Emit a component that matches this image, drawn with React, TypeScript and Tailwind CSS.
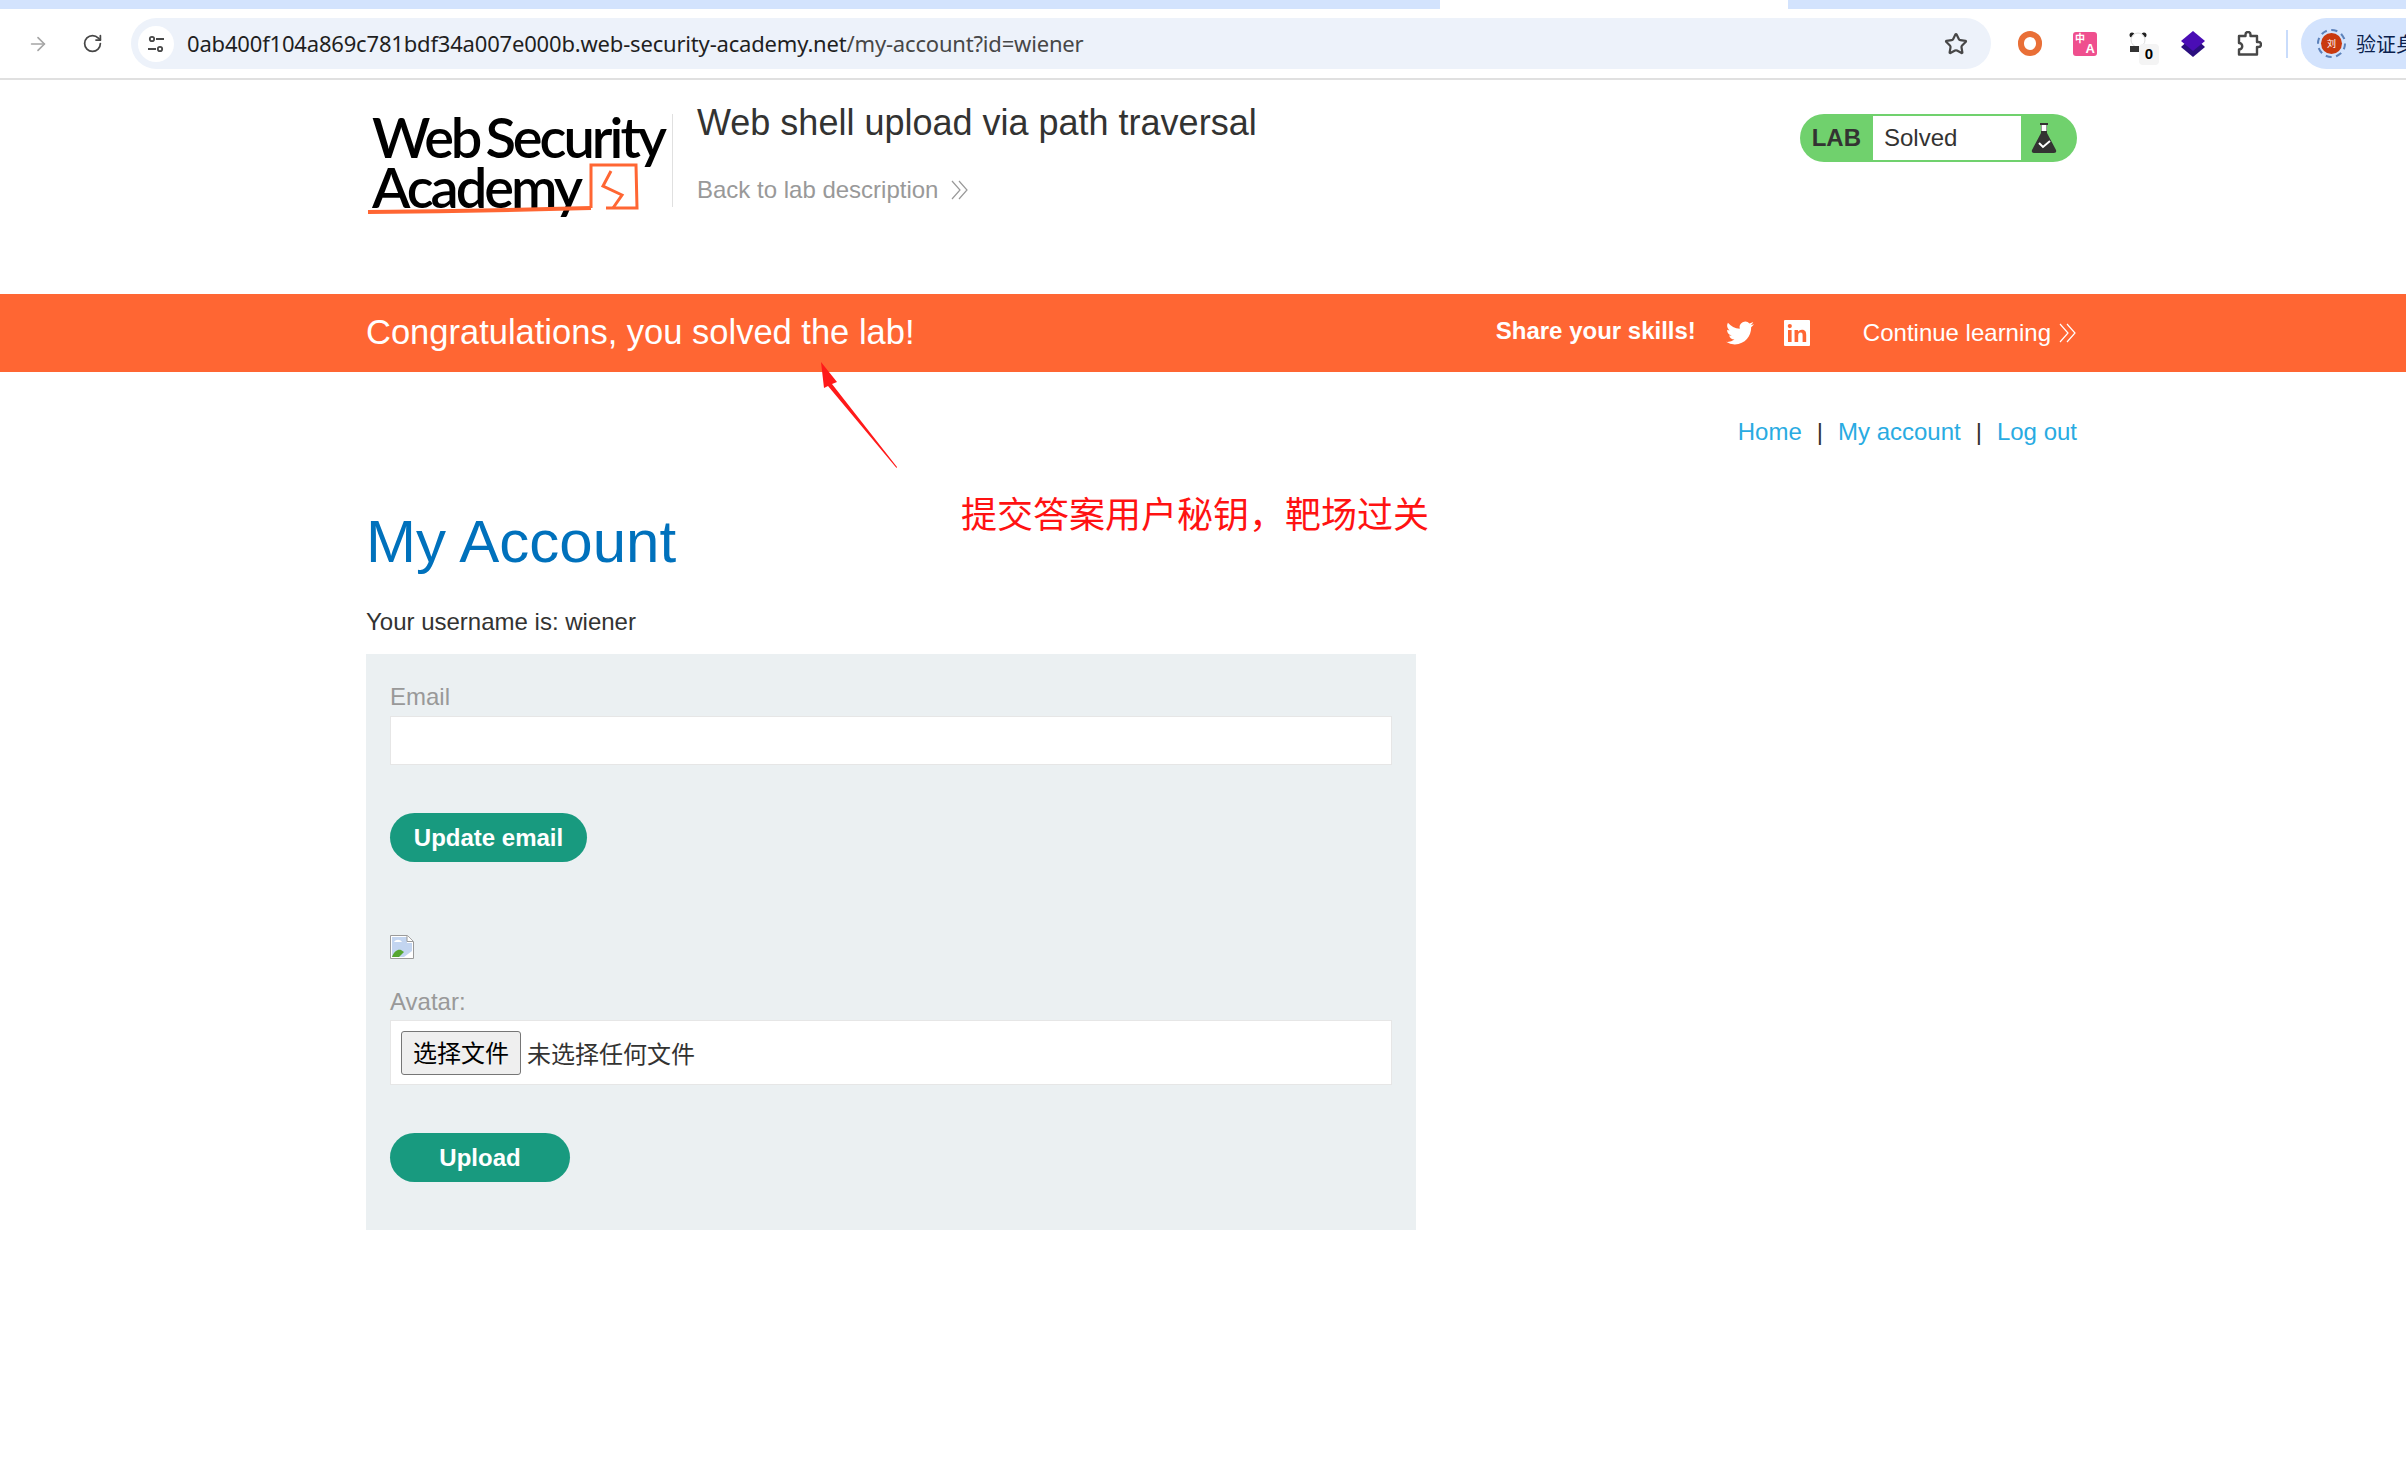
import { RotateCw, ArrowRight, Star } from 'lucide-react'

const SANS = 'font-["Liberation_Sans","Noto_Sans_CJK_SC",sans-serif]'

function Chevrons({ className }: { className?: string }) {
  return (
    <svg viewBox="0 0 18 20" className={className} fill="none" stroke="currentColor" strokeWidth="1.2">
      <path d="M1 1l8 9-8 9M8 1l8 9-8 9" />
    </svg>
  )
}

function Toolbar() {
  return (
    <div className="h-[80px] border-b-2 border-[#e0e0e0] bg-white">
      <div className="flex h-[9px] bg-[#d3e3fd]">
        <div className="ml-[1440px] w-[348px] bg-white" />
      </div>
      <div className="flex h-[69px] items-center">
        <ArrowRight className="ml-[27px] h-[22px] w-[22px] text-[#a5a5a5]" strokeWidth={1.8} />
        <RotateCw className="ml-[33px] h-[21px] w-[21px] text-[#474747]" strokeWidth={2} />
        <div className="ml-[28px] flex h-[51px] w-[1860px] items-center rounded-full bg-[#edf2fa] pl-[7px] pr-[23px]">
          <div className="flex h-[36px] w-[36px] items-center justify-center rounded-full bg-white">
            <svg viewBox="0 0 20 20" className="h-[20px] w-[20px]" fill="none" stroke="#474747" strokeWidth="1.8">
              <circle cx="6" cy="5" r="2.2" />
              <path d="M10 5h8M2 15h8" />
              <circle cx="14" cy="15" r="2.2" />
            </svg>
          </div>
          <div className='ml-[13px] font-["Noto_Sans",sans-serif] text-[22px] tracking-[-0.18px] whitespace-nowrap text-[#1f1f1f]'>
            0ab400f104a869c781bdf34a007e000b.web-security-academy.net<span className="text-[#474747]">/my-account?id=wiener</span>
          </div>
          <Star className="ml-auto h-[24px] w-[24px] text-[#474747]" strokeWidth={2.2} />
        </div>
        <div className="ml-[27px] h-[25px] w-[24px] rounded-full border-[6px] border-[#e96f37]" />
        <div className='relative ml-[31px] h-[24px] w-[24px] rounded-[3px] bg-[#ef4f8e] font-["Noto_Sans_CJK_SC",sans-serif] leading-none font-bold text-white'>
          <span className="absolute top-[1px] left-[2px] text-[10px]">中</span>
          <span className='absolute right-[2px] bottom-[1px] font-["Liberation_Sans",sans-serif] text-[13px]'>A</span>
        </div>
        <div className="relative ml-[32px] h-[24px] w-[24px]">
          <svg viewBox="0 0 18 22" className="h-[22px] w-[18px]">
            <circle cx="3" cy="3" r="2.5" fill="#222" />
            <circle cx="15" cy="3" r="2.5" fill="#222" />
            <circle cx="9" cy="8" r="7" fill="#fff" stroke="#ddd" />
            <rect x="1" y="14" width="9" height="6" fill="#333" />
          </svg>
          <div className='absolute top-[12px] left-[10px] flex h-[21px] w-[20px] items-center justify-center rounded-[4px] bg-[#f4f4f4] font-["Liberation_Sans",sans-serif] text-[15px] font-bold text-black'>
            0
          </div>
        </div>
        <svg viewBox="0 0 26 26" className="ml-[27px] h-[26px] w-[26px]">
          <path d="M13 5L25 16 13 26 1 16z" fill="#2b0f7f" />
          <path d="M13 0L25 10 13 20 1 10z" fill="#4a0db5" />
        </svg>
        <svg viewBox="0 0 26 26" className="ml-[30px] h-[26px] w-[26px]" fill="none" stroke="#474747" strokeWidth="2.4" strokeLinejoin="round">
          <path d="M3 5h6.500V3.500a2.500 2.500 0 0 1 5 0V5H21v6h1.500a2.500 2.500 0 0 1 0 5H21v7.500H3V18.500a3 3 0 0 0 0-6.500z" />
        </svg>
        <div className="ml-[24px] h-[28px] w-[2px] bg-[#c9dcfb]" />
        <div className="ml-[13px] flex h-[51px] flex-1 items-center overflow-hidden rounded-l-full bg-[#d3e3fd] pl-[16px]">
          <div className="flex h-[29px] w-[29px] shrink-0 items-center justify-center rounded-full border-2 border-dashed border-[#5c82bb]">
            <div className='flex h-[21px] w-[21px] items-center justify-center rounded-full bg-[#c9390f] font-["Noto_Sans_CJK_SC",sans-serif] text-[9px] text-white'>
              刘
            </div>
          </div>
          <span className='ml-[10px] font-["Noto_Sans_CJK_SC",sans-serif] text-[20px] whitespace-nowrap text-[#0b1f4d]'>验证身份</span>
        </div>
      </div>
    </div>
  )
}

function Logo() {
  return (
    <div className="relative h-[106px] w-[306px]">
      <div className='-mt-[2px] pl-[6px] font-["Lato",sans-serif] text-[56px] leading-[50px] font-semibold tracking-[-3px] [word-spacing:-5px] whitespace-nowrap text-black'>
        <div>Web Security</div>
        <div>Academy</div>
      </div>
      <svg viewBox="0 0 280 60" className="absolute top-[48px] left-[0px] h-[60px] w-[280px]" fill="none" stroke="#ff6633">
        <path d="M2 52 Q110 51 225 48" strokeWidth="4" />
        <path d="M225 48V5H270L271 48H240" strokeWidth="3" />
        <path d="M245 11L237 26 256 35 247 48" strokeWidth="3" />
      </svg>
    </div>
  )
}

function LabStatus() {
  return (
    <div className="flex h-[48px] w-[277px] items-stretch overflow-hidden rounded-full bg-[#70d16d]">
      <div className="flex w-[73px] items-center justify-end pr-[12px] text-[24px] font-bold text-[#333332]">LAB</div>
      <div className="my-[2px] flex w-[148px] items-center bg-white pl-[11px] text-[24px] text-[#333332]">Solved</div>
      <div className="flex flex-1 items-center justify-center pr-[10px]">
        <svg viewBox="0 0 26 32" className="h-[32px] w-[26px]">
          <path d="M9 1h8v2h-1v8l9 17q1 3-2 3H3q-3 0-2-3l9-17V3H9z" fill="#333332" />
          <path d="M10.500 3h5v6h-5z" fill="#fff" />
          <path d="M8 21l4 4 7-6" fill="none" stroke="#fff" strokeWidth="2" />
        </svg>
      </div>
    </div>
  )
}

function Header() {
  return (
    <header className="ml-[366px] flex h-[214px] w-[1711px]">
      <div className="mt-[34px]">
        <Logo />
      </div>
      <div className="mt-[34px] h-[93px] w-[1px] bg-[#e0e0e0]" />
      <div className="ml-[24px] flex-1 pt-[21px]">
        <div className="text-[36px] leading-[44px] text-[#333332]">Web shell upload via path traversal</div>
        <div className="mt-[31px] flex items-center text-[24px] leading-[28px] text-[#999]">
          Back to lab description
          <Chevrons className="ml-[13px] h-[20px] w-[18px]" />
        </div>
      </div>
      <div className="mt-[34px]">
        <LabStatus />
      </div>
    </header>
  )
}

function Banner() {
  return (
    <div className="h-[78px] bg-[#ff6633] text-white">
      <div className="ml-[366px] flex h-full w-[1711px] items-center">
        <div className="text-[34.500px]">Congratulations, you solved the lab!</div>
        <div className="ml-auto -translate-y-[2px] text-[24px] font-bold">Share your skills!</div>
        <svg viewBox="0 0 24 24" className="ml-[30px] h-[28px] w-[28px]" fill="currentColor">
          <path d="M23.95 4.57a10 10 0 0 1-2.82.77 4.96 4.96 0 0 0 2.16-2.72c-.95.55-2 .96-3.12 1.19a4.92 4.92 0 0 0-8.38 4.48C7.69 8.1 4.07 6.13 1.64 3.16a4.82 4.82 0 0 0-.67 2.48c0 1.71.87 3.21 2.19 4.1a4.9 4.9 0 0 1-2.23-.62v.06a4.92 4.92 0 0 0 3.95 4.83 5 5 0 0 1-2.21.08 4.94 4.94 0 0 0 4.6 3.42A9.87 9.87 0 0 1 0 19.54 13.9 13.9 0 0 0 7.55 21.75c9.05 0 14-7.5 14-13.98 0-.21 0-.42-.02-.63a9.94 9.94 0 0 0 2.46-2.55z" />
        </svg>
        <svg viewBox="0 0 26 26" className="ml-[30px] h-[26px] w-[26px]">
          <rect width="26" height="26" rx="1" fill="#fff" />
          <path d="M4 10h3.600v12H4zM5.800 4a2.100 2.100 0 1 1 0 4.200 2.100 2.100 0 0 1 0-4.200zM10.500 10H14v1.700c.6-1 1.900-2 3.900-2 3.600 0 4.300 2.400 4.300 5.400V22h-3.600v-6.200c0-1.500 0-3.300-2-3.300s-2.400 1.600-2.400 3.200V22h-3.600z" fill="#ff6633" />
        </svg>
        <div className="ml-[53px] text-[24px]">Continue learning</div>
        <Chevrons className="ml-[8px] h-[20px] w-[18px]" />
      </div>
    </div>
  )
}

function AccountForm() {
  const inputBox = 'w-full border border-[#e6e6e6] bg-white'
  return (
    <div className="mt-[15px] h-[576px] w-[1050px] bg-[#ebf0f2] px-[24px] pt-[27px]">
      <label className="block text-[24px] leading-[32px] text-[#999]">Email</label>
      <div className={`mt-[3px] h-[49px] ${inputBox}`} />
      <button className="mt-[48px] block h-[49px] w-[197px] rounded-full bg-[#189a7f] text-[24px] font-bold text-white">
        Update email
      </button>
      <svg viewBox="0 0 24 24" className="mt-[73px] block h-[24px] w-[24px]">
        <path d="M.5.5h17l6 6v17H.5z" fill="#fff" stroke="#9a9a9a" />
        <path d="M2 2h15v6h5v8L14 22H2z" fill="#c3d5f0" />
        <path d="M2 22c2-6 6-8 9-7l3 2-5 5z" fill="#55a630" />
        <path d="M4 7c2-3 6-3 8 0z" fill="#fff" />
        <path d="M17 .5v6h6" fill="#fff" stroke="#9a9a9a" />
      </svg>
      <label className="mt-[27px] block text-[24px] leading-[32px] text-[#999]">Avatar:</label>
      <div className={`mt-[2px] flex h-[65px] items-center pl-[10px] ${inputBox}`}>
        <button className="h-[44px] w-[120px] rounded-[3px] border border-[#767676] bg-[#efefef] pt-[3px] text-[24px] text-black">选择文件</button>
        <span className="mt-[4px] ml-[6px] text-[24px] text-[#333332]">未选择任何文件</span>
      </div>
      <button className="mt-[48px] block h-[49px] w-[180px] rounded-full bg-[#189a7f] text-[24px] font-bold text-white">
        Upload
      </button>
    </div>
  )
}

export default function App() {
  return (
    <div className={`relative min-h-[1470px] overflow-hidden bg-white ${SANS}`}>
      <Toolbar />
      <Header />
      <Banner />
      <main className="ml-[366px] w-[1711px]">
        <nav className="flex justify-end gap-[15px] pt-[43px] text-[24px] leading-[34px] text-[#29abe2]">
          <a>Home</a>
          <span className="text-[#333332]">|</span>
          <a>My account</a>
          <span className="text-[#333332]">|</span>
          <a>Log out</a>
        </nav>
        <h1 className="mt-[57px] text-[60px] leading-[72px] text-[#0071bc]">My Account</h1>
        <p className="mt-[27px] text-[24px] leading-[34px] text-[#333332]">Your username is: wiener</p>
        <AccountForm />
      </main>

      {/* red annotation pasted over the screenshot */}
      <svg viewBox="0 0 90 120" className="absolute top-[355px] left-[813px] h-[120px] w-[90px]" fill="#ff1a1a">
        <path d="M8 7L24 27 19 29 84 112 83.500 113 15 31 11 33z" />
      </svg>
      <div className="absolute top-[491px] left-[961px] text-[36px] leading-[50px] whitespace-nowrap text-[#ff1212]">
        提交答案用户秘钥，靶场过关
      </div>
    </div>
  )
}
